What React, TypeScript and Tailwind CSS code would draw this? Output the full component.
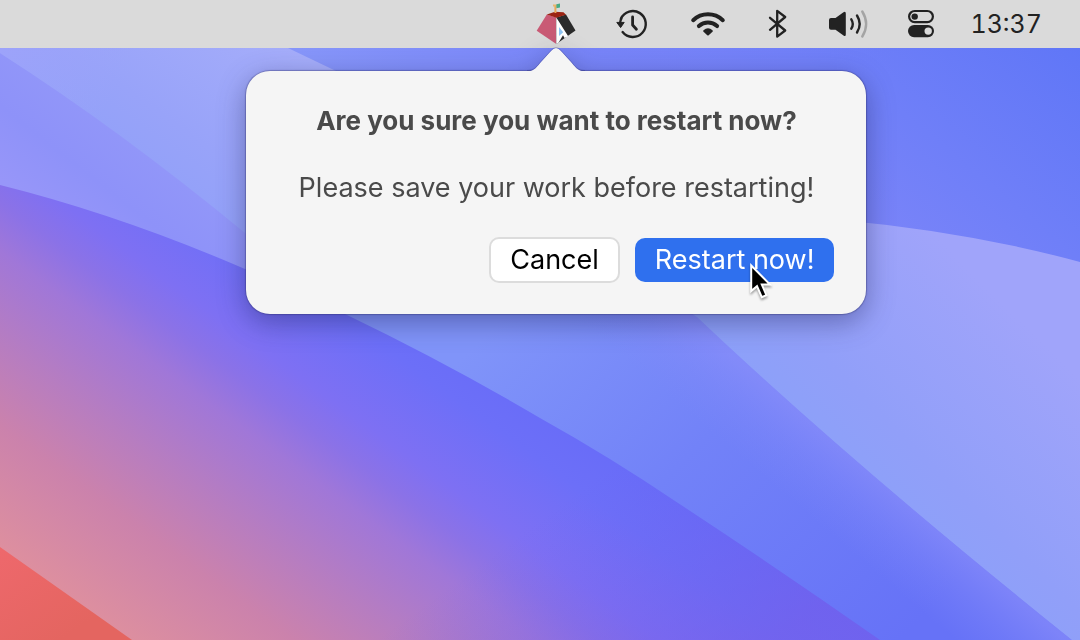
import type { ReactNode } from "react";

function Wallpaper() {
  return (
    <svg
      className="absolute inset-0 h-full w-full"
      viewBox="0 0 1080 640"
      preserveAspectRatio="xMidYMid slice"
      aria-hidden="true"
    >
      <defs>
        <linearGradient id="sky" gradientUnits="userSpaceOnUse" x1="1080" y1="40" x2="840" y2="330">
          <stop offset="0" stopColor="#5f76f7" />
          <stop offset="0.45" stopColor="#6f7ff8" />
          <stop offset="1" stopColor="#8388f9" />
        </linearGradient>
        <linearGradient id="skyLeft" gradientUnits="userSpaceOnUse" x1="300" y1="48" x2="900" y2="48">
          <stop offset="0" stopColor="#8796fa" />
          <stop offset="0.5" stopColor="#7684f8" stopOpacity="0.85" />
          <stop offset="1" stopColor="#6f7ff8" stopOpacity="0" />
        </linearGradient>
        <linearGradient id="haze" gradientUnits="userSpaceOnUse" x1="280" y1="40" x2="130" y2="250">
          <stop offset="0" stopColor="#a5adfa" />
          <stop offset="0.5" stopColor="#98a3f9" />
          <stop offset="1" stopColor="#8c9ef9" />
        </linearGradient>
        <linearGradient id="hazeLow" gradientUnits="userSpaceOnUse" x1="130" y1="135" x2="60" y2="225">
          <stop offset="0" stopColor="#9193f9" stopOpacity="0.75" />
          <stop offset="0.5" stopColor="#8e92f9" />
          <stop offset="1" stopColor="#9796f9" />
        </linearGradient>
        <linearGradient id="hazeCorner" gradientUnits="userSpaceOnUse" x1="0" y1="48" x2="110" y2="100">
          <stop offset="0" stopColor="#9da3fa" />
          <stop offset="1" stopColor="#9da3fa" stopOpacity="0" />
        </linearGradient>
        <linearGradient id="band" gradientUnits="userSpaceOnUse" x1="520" y1="300" x2="880" y2="660">
          <stop offset="0" stopColor="#8094f9" />
          <stop offset="0.45" stopColor="#7282f8" />
          <stop offset="1" stopColor="#6672f7" />
        </linearGradient>
        <linearGradient id="bandEdge" gradientUnits="userSpaceOnUse" x1="884" y1="486" x2="838" y2="540">
          <stop offset="0" stopColor="#8c8ffa" stopOpacity="0.6" />
          <stop offset="0.5" stopColor="#858bf9" stopOpacity="0.3" />
          <stop offset="1" stopColor="#8088f9" stopOpacity="0" />
        </linearGradient>
        <linearGradient id="dune" gradientUnits="userSpaceOnUse" x1="780" y1="440" x2="960" y2="260">
          <stop offset="0" stopColor="#8ba1f9" />
          <stop offset="0.35" stopColor="#919ff9" />
          <stop offset="1" stopColor="#a0a4fa" />
        </linearGradient>
        <linearGradient id="dusk" gradientUnits="userSpaceOnUse" x1="0" y1="0" x2="-260" y2="356">
          <stop offset="0" stopColor="#686cf8" />
          <stop offset="0.12" stopColor="#6c6ff8" />
          <stop offset="0.29" stopColor="#7e70f3" />
          <stop offset="0.37" stopColor="#8b72e7" />
          <stop offset="0.46" stopColor="#a077d8" />
          <stop offset="0.63" stopColor="#b77dc0" />
          <stop offset="0.78" stopColor="#cb82ac" />
          <stop offset="1" stopColor="#dd8f9f" />
        </linearGradient>
        <linearGradient id="duskLow" gradientUnits="userSpaceOnUse" x1="620" y1="460" x2="760" y2="650">
          <stop offset="0" stopColor="#6a60ee" stopOpacity="0" />
          <stop offset="1" stopColor="#745ce8" stopOpacity="0.6" />
        </linearGradient>
        <linearGradient id="ember" gradientUnits="userSpaceOnUse" x1="0" y1="550" x2="60" y2="640">
          <stop offset="0" stopColor="#ee686c" />
          <stop offset="1" stopColor="#e46560" />
        </linearGradient>
      </defs>
      <rect width="1080" height="640" fill="url(#sky)" />
      <rect width="1080" height="200" fill="url(#skyLeft)" />
      <path d="M300 280H690L697 317Q850 462 1072 640H860L300 340Z" fill="url(#band)" />
      <path d="M500 280H660L697 317Q850 462 1072 640H900Z" fill="url(#bandEdge)" />
      <path d="M640 280L700 220H840Q970 232 1080 262V640H1072Q850 462 697 317Z" fill="url(#dune)" />
      <path d="M0 0H190L288 48L336 71L440 140V300H340L0 200Z" fill="url(#haze)" />
      <path d="M0 53Q120 130 245 233L320 300H250L0 220Z" fill="url(#hazeLow)" />
      <path d="M0 48H160L245 233Q120 130 0 53V185H0Z" fill="url(#hazeCorner)" />
      <path
        d="M0 185Q120 215 245 269Q295 290 345 314Q445 362 540 418Q610 457 678 503Q780 570 880 640H0Z"
        fill="url(#dusk)"
      />
      <path d="M400 340Q470 376 540 418Q610 457 678 503Q780 570 880 640H300Z" fill="url(#duskLow)" />
      <path d="M0 547L132 640H0Z" fill="url(#ember)" />
    </svg>
  );
}

function PyramidLogo() {
  return (
    <svg className="h-11 w-10" viewBox="536 2 40 44" aria-hidden="true">
      <path d="M546.8 14.5L556.3 17.5V44L536.7 30.7Z" fill="#c95a75" />
      <path d="M556.3 17.5L566 14.5L575.5 30.5L556.3 44Z" fill="#2b2b2b" />
      <path d="M556.3 17.5L568.2 36.2L564.5 38L563 35.3L558.6 42.4L556.3 44Z" fill="#fff" />
      <path d="M559 27L563.2 32.3L559 36Z" fill="#8fc4f2" />
      <path d="M546.8 14.5L555 11.8L563.5 12.3L566 14.8L556.3 17.8Z" fill="#9b2413" />
      <path d="M555.4 13V6" stroke="#e8a95b" strokeWidth="2" fill="none" />
      <path d="M553 5.5H557" stroke="#e8b56e" strokeWidth="2" fill="none" />
      <path d="M556.4 4.2L560 3.6V7.4L556.4 8.2Z" fill="#45ab86" />
    </svg>
  );
}

function TimeMachineIcon() {
  return (
    <svg className="h-8 w-8" viewBox="616 8 32 32" fill="none" stroke="#222" aria-hidden="true">
      <path d="M620.9 18.7A13 13 0 1 1 622.6 32.1" strokeWidth="2.4" strokeLinecap="round" />
      <path d="M620.1 23A13 13 0 0 1 621.6 18" strokeWidth="2.4" />
      <path d="M616.8 22.4H624.2L620.6 27.6Z" fill="#222" strokeLinejoin="round" />
      <path d="M632.6 17V25L636.4 29.3" strokeWidth="2.8" strokeLinecap="round" strokeLinejoin="round" />
    </svg>
  );
}

function WifiIcon() {
  return (
    <svg className="h-8 w-10" viewBox="688 8 40 32" fill="none" stroke="#222" aria-hidden="true">
      <path d="M693.2 20.2A21.6 21.6 0 0 1 722.8 20.2" strokeWidth="4" strokeLinecap="round" />
      <path d="M698.9 26.1A13.6 13.6 0 0 1 717.1 26.1" strokeWidth="4" strokeLinecap="round" />
      <path
        d="M703.5 30.3Q708 26.3 712.5 30.3Q713.2 31 712.5 31.7L708.7 35.3Q708 35.9 707.3 35.3L703.5 31.7Q702.8 31 703.5 30.3Z"
        fill="#222"
        stroke="none"
      />
    </svg>
  );
}

function BluetoothIcon() {
  return (
    <svg className="h-8 w-5" viewBox="768 8 20 32" fill="none" aria-hidden="true">
      <path
        d="M770 17.8L785.2 30.5L777.2 36.6V10.8L785.2 17L770 29.8"
        stroke="#222"
        strokeWidth="2.3"
        strokeLinecap="round"
        strokeLinejoin="round"
      />
    </svg>
  );
}

function SpeakerIcon() {
  return (
    <svg className="h-8 w-10" viewBox="828 8 40 32" fill="none" stroke="#222" strokeWidth="2.4" strokeLinecap="round" aria-hidden="true">
      <path
        d="M831 18H835.5L843.5 12.2Q845.8 11 845.8 13.5V34.5Q845.8 37 843.5 35.6L835.5 29.8H831Q829 29.8 829 27.8V20Q829 18 831 18Z"
        fill="#222"
        stroke="none"
      />
      <path d="M851.3 19.3Q854.3 24 851.3 28.7" />
      <path d="M857 15.5Q862.4 24 857 32.5" />
      <path d="M862.3 11.5Q870 24 862.3 36.5" stroke="#a4a4a4" />
    </svg>
  );
}

function ControlCentreIcon() {
  return (
    <svg className="h-8 w-[26px]" viewBox="907 8 26 32" aria-hidden="true">
      <rect x="908.1" y="11" width="23.8" height="11.2" rx="5.6" fill="none" stroke="#222" strokeWidth="2.2" />
      <circle cx="913.7" cy="16.6" r="3.2" fill="#222" />
      <rect x="907" y="25" width="26" height="12.2" rx="6.1" fill="#222" />
      <circle cx="927.2" cy="31.1" r="3.7" fill="#dadada" />
    </svg>
  );
}

function MenuBarItem({ label, children }: { label: string; children: ReactNode }) {
  return (
    <button type="button" aria-label={label} className="flex shrink-0 items-center">
      {children}
    </button>
  );
}

function Pointer() {
  return (
    <svg
      className="pointer-events-none absolute top-6 left-28 h-10 w-7 drop-shadow-[0_2px_1px_rgba(0,0,0,0.35)]"
      viewBox="747 262 28 40"
      aria-hidden="true"
    >
      <path
        d="M751.2 265.5V291L757 286.2L761.8 297.2L766.4 295.2L761.8 284.6H770Z"
        fill="#000"
        stroke="#fff"
        strokeWidth="2"
        strokeLinejoin="miter"
      />
    </svg>
  );
}

function RestartPopover() {
  return (
    <div
      role="dialog"
      aria-labelledby="restart-title"
      aria-describedby="restart-text"
      className="absolute top-full left-1/2 z-10 flex w-[620px] -translate-x-1/2 flex-col items-center drop-shadow-[0_8px_14px_rgba(20,20,70,0.38)]"
    >
      <svg className="relative z-10 h-6 w-16 overflow-visible" viewBox="0 0 64 24" aria-hidden="true">
        <path d="M3 25V23.5C11 23 13 18.5 17 14L27.5 2.5Q32 -2.5 36.5 2.5L47 14C51 18.5 53 23 61 23.5V25Z" fill="#f5f5f5" />
        <path
          d="M3 22.5C11 22.5 13 18 17 13.5L27.5 2Q32 -3 36.5 2L47 13.5C51 18 53 22.5 61 22.5"
          fill="none"
          stroke="#28286a"
          strokeOpacity="0.28"
        />
      </svg>
      <div className="-mt-px flex w-full flex-col gap-8 rounded-3xl bg-[#f5f5f5] p-8 pb-[31px] text-center text-[#4a4a4a] shadow-[0_0_1px_1px_rgba(40,40,100,0.35)]">
        <h1 id="restart-title" className="text-[26px] leading-[35px] font-bold">
          Are you sure you want to restart now?
        </h1>
        <p id="restart-text" className="text-[27px] leading-[35px]">
          Please save your work before restarting!
        </p>
        <div className="flex items-center justify-end gap-[15px]">
          <button
            type="button"
            className="h-[46px] rounded-[10px] border-2 border-[#dcdcdc] bg-white px-[19px] text-[27px] leading-8 text-black"
          >
            Cancel
          </button>
          <div className="relative">
            <button
              type="button"
              className="block h-11 rounded-[10px] bg-[#2f70ee] px-5 text-[27px] leading-8 text-white"
            >
              Restart now!
            </button>
            <Pointer />
          </div>
        </div>
      </div>
    </div>
  );
}

export default function App() {
  return (
    <main className="relative min-h-screen overflow-hidden bg-[#6f7ff8] font-['Inter','Liberation_Sans',sans-serif]">
      <Wallpaper />
      <header className="relative flex h-12 items-center justify-end gap-9 bg-[#dadada] pr-[38px]">
        <div className="flex items-center gap-10">
          <div className="relative flex h-12 items-center">
            <MenuBarItem label="Update assistant">
              <PyramidLogo />
            </MenuBarItem>
            <RestartPopover />
          </div>
          <MenuBarItem label="Time Machine">
            <TimeMachineIcon />
          </MenuBarItem>
          <MenuBarItem label="Wi-Fi">
            <WifiIcon />
          </MenuBarItem>
          <MenuBarItem label="Bluetooth">
            <BluetoothIcon />
          </MenuBarItem>
          <MenuBarItem label="Sound">
            <SpeakerIcon />
          </MenuBarItem>
          <MenuBarItem label="Control Centre">
            <ControlCentreIcon />
          </MenuBarItem>
        </div>
        <time className="text-[25px] leading-8 text-[#222] tabular-nums">13:37</time>
      </header>
    </main>
  );
}
